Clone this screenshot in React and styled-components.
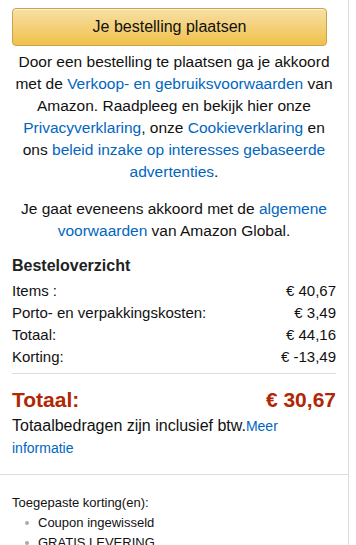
import React from "react";
import styled, { createGlobalStyle } from "styled-components";

const Global = createGlobalStyle`
body{
  margin: 0;
  background: #fff;
  font-family: "Liberation Sans", Arial, sans-serif;
  color: #111;
}
`

const Panel = styled.div`
width: 349px;
min-height: 100vh;
border-right: 1px solid #ddd;
box-sizing: border-box;
overflow: hidden;
`

const Top = styled.div`
padding: 8px 12px 0;
`

const PlaceBtn = styled.button`
display: block;
width: 315px;
height: 38px;
border: 1px solid #c9a447;
border-radius: 4px;
background: linear-gradient(to bottom, #f7dfa5, #f0c14b);
box-shadow: inset 0 1px 0 rgba(255,255,255,0.6);
font-family: inherit;
font-size: 16px;
color: #111;
cursor: pointer;
`

const Legal = styled.p`
margin: ${props => props.gap ? "15px" : "5px"} 0 0;
text-align: center;
font-size: 15.5px;
line-height: 22px;
color: #111;
`

const Link = styled.a`
color: #0066c0;
text-decoration: none;
font-size: ${props => props.small ? "14px" : "inherit"};
`

const Summary = styled.div`
padding: 13px 12px 0;
`

const Heading = styled.h3`
margin: 0 0 3px;
font-size: 16px;
font-weight: bold;
line-height: 22px;
color: #222;
`

const Row = styled.div`
display: flex;
justify-content: space-between;
font-size: 15px;
line-height: 22px;
color: #111;
`

const Divider = styled.hr`
border: none;
border-top: 1px solid #ddd;
margin: 5px 0 14px;
`

const GrandRow = styled.div`
display: flex;
justify-content: space-between;
font-size: 21px;
font-weight: bold;
line-height: 24px;
color: #b12704;
`

const Note = styled.div`
margin-top: 3px;
font-size: 16px;
line-height: 21px;
`

const FullLine = styled.div`
border-top: 1px solid #ddd;
margin-top: 15px;
`

const Discounts = styled.div`
padding: 18px 12px 0;
font-size: 13px;
line-height: 20px;
`

const List = styled.ul`
margin: 0;
padding-left: 26px;
list-style: none;

li{
  position: relative;
}

li::before{
  content: '';
  position: absolute;
  left: -13px;
  top: 8px;
  width: 4px;
  height: 4px;
  border-radius: 50%;
  background: #aaa;
}
`

const rows = [
  ["Items :", "€ 40,67"],
  ["Porto- en verpakkingskosten:", "€ 3,49"],
  ["Totaal:", "€ 44,16"],
  ["Korting:", "€ -13,49"],
]

const App = () => {
  return (
    <Panel>
      <Global />
      <Top>
        <PlaceBtn>Je bestelling plaatsen</PlaceBtn>
        <Legal>
          Door een bestelling te plaatsen ga je akkoord met de <Link href="#">Verkoop- en gebruiksvoorwaarden</Link> van Amazon. Raadpleeg en bekijk hier onze <Link href="#">Privacyverklaring</Link>, onze <Link href="#">Cookieverklaring</Link> en ons <Link href="#">beleid inzake op interesses gebaseerde advertenties</Link>.
        </Legal>
        <Legal gap>
          Je gaat eveneens akkoord met de <Link href="#">algemene voorwaarden</Link> van Amazon Global.
        </Legal>
      </Top>
      <Summary>
        <Heading>Besteloverzicht</Heading>
        {rows.map(r => (
          <Row key={r[0]}>
            <span>{r[0]}</span>
            <span>{r[1]}</span>
          </Row>
        ))}
        <Divider />
        <GrandRow>
          <span>Totaal:</span>
          <span>€ 30,67</span>
        </GrandRow>
        <Note>
          Totaalbedragen zijn inclusief btw.<Link href="#" small>Meer informatie</Link>
        </Note>
      </Summary>
      <FullLine />
      <Discounts>
        Toegepaste korting(en):
        <List>
          <li>Coupon ingewisseld</li>
          <li>GRATIS LEVERING</li>
        </List>
      </Discounts>
    </Panel>
  )
}

export default App;
